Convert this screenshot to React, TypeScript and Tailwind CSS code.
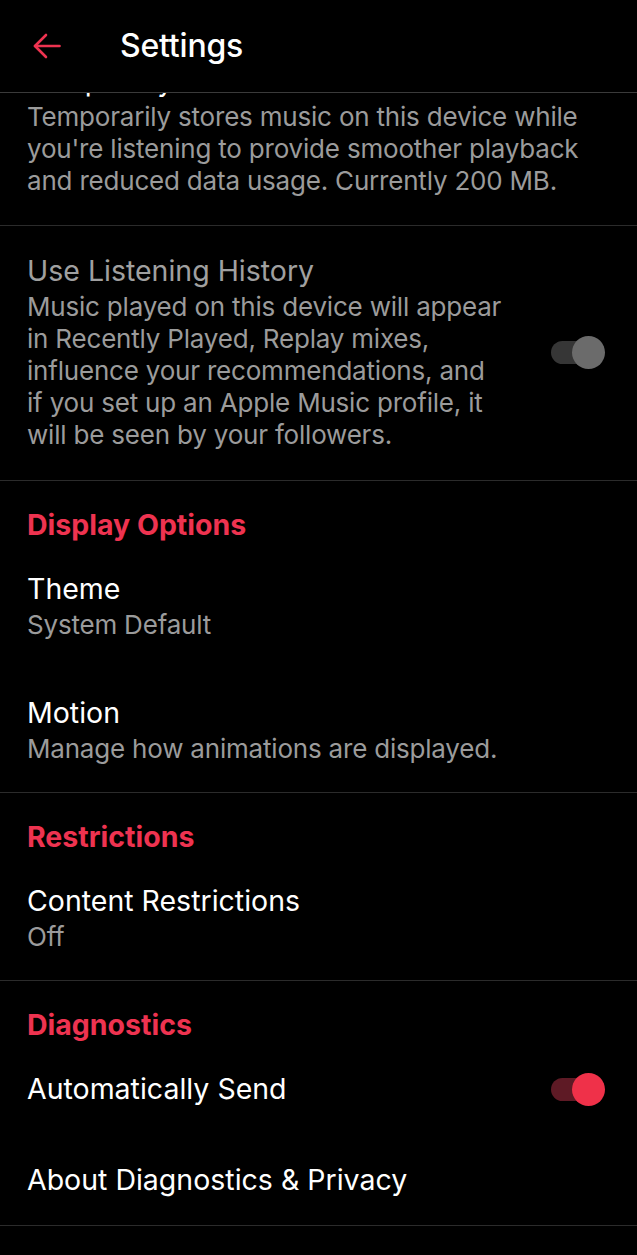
import React from 'react';

const font = { fontFamily: 'Inter, "Noto Sans", sans-serif' };

function Toggle({ on }: { on: boolean }) {
  return (
    <div className="relative w-[54px] h-[33px] shrink-0 mr-[5px]">
      <div className={`absolute left-0 top-[5px] w-[46px] h-[23px] rounded-full ${on ? 'bg-[#5e1a25]' : 'bg-[#363636]'}`} />
      <div className={`absolute right-0 top-0 w-[33px] h-[33px] rounded-full ${on ? 'bg-[#ef3149]' : 'bg-[#6b6b6b]'}`} />
    </div>
  );
}

function Item({ title, sub, toggle }: { title: string; sub?: string; toggle?: boolean }) {
  return (
    <div className="flex items-center justify-between">
      <div>
        <div className="text-[28.5px] leading-[36px] tracking-normal text-white">{title}</div>
        {sub && <div className="mt-0.5 text-[26px] leading-[32px] text-[#9b9b9b]">{sub}</div>}
      </div>
      {toggle !== undefined && <Toggle on={toggle} />}
    </div>
  );
}

function Section({ heading, wide, children }: { heading: string; wide?: boolean; children: React.ReactNode }) {
  return (
    <div className="px-[27px] pt-[26px] pb-[27px] border-b border-[#2b2b2b]">
      <div className="text-[28.5px] leading-[36px] tracking-normal font-bold text-[#ee3350]">{heading}</div>
      <div className={`mt-[28px] flex flex-col ${wide ? 'gap-[55px]' : 'gap-[54px]'}`}>{children}</div>
    </div>
  );
}

export default function App() {
  return (
    <div className="w-[637px] h-[1255px] bg-black overflow-hidden flex flex-col tracking-[-0.2px]" style={font}>
      {/* Header */}
      <div className="h-[93px] shrink-0 flex items-center border-b border-[#3a3a3a] pl-[33px]">
        <svg width="28" height="26" viewBox="0 0 28 26" fill="none" stroke="#ee3350" strokeWidth="2.6" strokeLinecap="round" strokeLinejoin="round">
          <path d="M26.5 13H2" />
          <path d="M13 2L2 13l11 11" />
        </svg>
        <span className="ml-[59px] text-[32px] font-medium text-white">Settings</span>
      </div>

      <div className="flex-1 overflow-hidden">
        {/* scrolled past the top of this one */}
        <div className="-mt-[30px] px-[27px] pb-[28px] border-b border-[#2b2b2b]">
          <div className="text-[28.5px] leading-[36px] tracking-normal text-white">Temporary Cache</div>
          <div className="mt-0.5 text-[26px] leading-[32px] text-[#9b9b9b]">
            Temporarily stores music on this device while you're listening to provide smoother playback and reduced data usage. Currently 200 MB.
          </div>
        </div>

        <div className="px-[27px] pt-[27px] pb-[29px] border-b border-[#2b2b2b] flex items-center justify-between">
          <div className="w-[512px]">
            <div className="text-[28.5px] leading-[36px] tracking-normal text-[#a0a0a0]">Use Listening History</div>
            <div className="mt-0.5 text-[26px] leading-[32px] text-[#9b9b9b]">
              Music played on this device will appear
              <br />
              in Recently Played, Replay mixes,
              <br />
              influence your recommendations, and
              <br />
              if you set up an Apple Music profile, it
              <br />
              will be seen by your followers.
            </div>
          </div>
          <Toggle on={false} />
        </div>

        <Section heading="Display Options">
          <Item title="Theme" sub="System Default" />
          <Item title="Motion" sub="Manage how animations are displayed." />
        </Section>

        <Section heading="Restrictions">
          <Item title="Content Restrictions" sub="Off" />
        </Section>

        <Section heading="Diagnostics" wide>
          <Item title="Automatically Send" toggle={true} />
          <Item title="About Diagnostics & Privacy" />
        </Section>
      </div>
    </div>
  );
}
